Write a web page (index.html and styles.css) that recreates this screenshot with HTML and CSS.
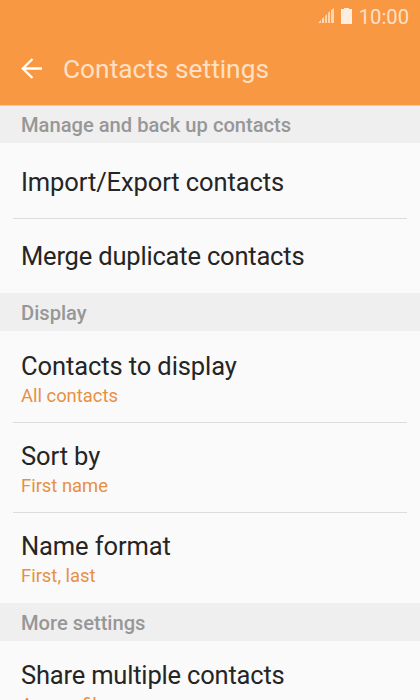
FILE: index.html
```html
<!DOCTYPE html>
<html lang="en">
<head>
<meta charset="utf-8">
<title>Contacts settings</title>
<link rel="stylesheet" href="styles.css">
</head>
<body>
<header class="top">
  <div class="status">
    <svg class="signal" width="17" height="16" viewBox="0 0 17 16"><path d="M0 15l3-3v3zM4 11l2-2v6H4zM7 8l2-2v9H7zM10 5l2-2v12h-2zM13 2l3-2v15h-3z" fill="#ffe0c4" fill-opacity=".85"/></svg>
    <svg class="battery" width="11" height="16" viewBox="0 0 11 16"><path d="M3 0h5v1h3v15H0V1h3z" fill="#ffeedf"/></svg>
    <span class="time">10:00</span>
  </div>
  <div class="bar">
    <svg class="back" width="22" height="22" viewBox="0 0 22 22"><path d="M21 10.500H2M11.500 1L1.800 10.500l9.700 9.500" fill="none" stroke="#fff" stroke-width="2.300"/></svg>
    <h1 class="title">Contacts settings</h1>
  </div>
</header>
<main>
  <h2 class="section first">Manage and back up contacts</h2>
  <div class="row single"><span class="name">Import/Export contacts</span></div>
  <div class="row single"><span class="name">Merge duplicate contacts</span></div>
  <h2 class="section">Display</h2>
  <div class="row"><span class="name wide">Contacts to display</span><span class="value">All contacts</span></div>
  <div class="row"><span class="name wide">Sort by</span><span class="value">First name</span></div>
  <div class="row"><span class="name wide">Name format</span><span class="value">First, last</span></div>
  <h2 class="section">More settings</h2>
  <div class="row last"><span class="name">Share multiple contacts</span><span class="value">As one file</span></div>
</main>
</body>
</html>
```
FILE: styles.css
```css
* { box-sizing: border-box; }
body { margin: 0; height: 700px; overflow: hidden; background: #fafafa; font-family: Roboto, sans-serif; }
.top { height: 105px; background: #f99843; color: #ffe0c6; }
.status { height: 32px; display: flex; justify-content: flex-end; align-items: center; padding-right: 11px; }
.signal, .battery { margin-bottom: 1px; }
.battery { margin-left: 6px; margin-right: 7px; }
.time { font-size: 20.2px; line-height: 24px; padding-top: 1px; }
.bar { height: 73px; display: flex; align-items: center; padding-left: 21px; }
.title { margin: 0 0 0 20px; font-size: 26.3px; font-weight: 400; }
.section { margin: 0; height: 38px; padding-left: 21px; background: #efefef; color: #979797; font-size: 20.15px; font-weight: 500; line-height: 40px; }
.first { box-shadow: inset 0 1px #d9cec6; }
.row { height: 90.5px; margin: 0 13px; padding: 20px 8px 0; display: flex; flex-direction: column; }
.row + .row { padding-top: 18px; border-top: 1px solid #dcdcdc; }
.row.single { height: 75px; padding-top: 24px; }
.row.single + .single { padding-top: 22px; }
.row.last { padding-top: 19px; }
.name { font-size: 25.5px; letter-spacing: -0.19px; line-height: 31px; color: #252525; }
.single:nth-child(2) .name, .wide { letter-spacing: -0.1px; }
.value { font-size: 18.4px; line-height: 27px; color: #e69045; }
```
